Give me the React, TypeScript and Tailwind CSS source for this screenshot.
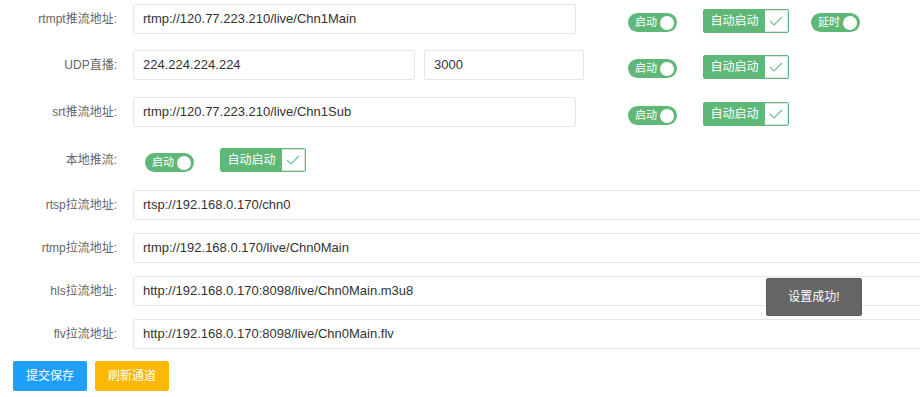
import React from "react";

const font = {
  fontFamily: '"Liberation Sans", Arial, "Noto Sans CJK SC", sans-serif',
};

const Toggle = ({ text }: { text: string }) => (
  <div className="flex h-[19px] w-[49px] items-center justify-between rounded-full bg-[#5FB878] pl-[7px] pr-[3px]">
    <span className="text-[11px] leading-none text-white">{text}</span>
    <span className="size-[14px] rounded-full bg-white" />
  </div>
);

const AutoStart = () => (
  <div className="flex h-6 w-[86px] overflow-hidden rounded-[2px] border border-[#5FB878]">
    <div className="flex w-[61px] items-center justify-center bg-[#5FB878] text-[12px] text-white">
      自动启动
    </div>
    <div className="flex flex-1 items-center justify-center border-y border-r border-[#e2e2e2] bg-white">
      <svg width="14" height="10" viewBox="0 0 14 10" fill="none">
        <path d="M1 5 L5 9 L13 1" stroke="#6cc28a" strokeWidth="1.1" />
      </svg>
    </div>
  </div>
);

const Label = ({ children, h = "h-[30px]" }: { children: React.ReactNode; h?: string }) => (
  <div className={`flex ${h} w-[117px] shrink-0 items-center justify-end text-[12px] text-[#666]`}>
    {children}
  </div>
);

const Input = ({ value, w }: { value: string; w: string }) => (
  <div
    className={`flex h-[30px] ${w} shrink-0 items-center rounded-[2px] border border-[#e6e6e6] bg-white pl-[9px] text-[13px] text-[#333]`}
  >
    {value}
  </div>
);

const Controls = ({ delay }: { delay?: boolean }) => (
  <div className="ml-[44px] flex items-start">
    <div className="mt-[9px]">
      <Toggle text="启动" />
    </div>
    <div className="ml-[26px] mt-[5px]">
      <AutoStart />
    </div>
    {delay && (
      <div className="ml-[22px] mt-[9px]">
        <Toggle text="延时" />
      </div>
    )}
  </div>
);

const pullRows = [
  { label: "rtsp拉流地址:", value: "rtsp://192.168.0.170/chn0" },
  { label: "rtmp拉流地址:", value: "rtmp://192.168.0.170/live/Chn0Main" },
  { label: "hls拉流地址:", value: "http://192.168.0.170:8098/live/Chn0Main.m3u8" },
  { label: "flv拉流地址:", value: "http://192.168.0.170:8098/live/Chn0Main.flv" },
];

export default function App() {
  return (
    <div className="relative h-[397px] w-[920px] overflow-hidden bg-white pt-[4px]" style={font}>
      {/* push rows */}
      <div className="flex items-start">
        <Label>rtmpt推流地址:</Label>
        <div className="ml-[16px] w-[451px]">
          <Input value="rtmp://120.77.223.210/live/Chn1Main" w="w-[443px]" />
        </div>
        <Controls delay />
      </div>

      <div className="mt-[16px] flex items-start">
        <Label>UDP直播:</Label>
        <div className="ml-[16px] flex w-[451px] gap-[9px]">
          <Input value="224.224.224.224" w="w-[282px]" />
          <Input value="3000" w="w-[160px]" />
        </div>
        <Controls />
      </div>

      <div className="mt-[17px] flex items-start">
        <Label>srt推流地址:</Label>
        <div className="ml-[16px] w-[451px]">
          <Input value="rtmp://120.77.223.210/live/Chn1Sub" w="w-[443px]" />
        </div>
        <Controls />
      </div>

      <div className="mt-[21px] flex items-start">
        <Label h="h-6">本地推流:</Label>
        <div className="ml-[28px] mt-[5px]">
          <Toggle text="启动" />
        </div>
        <div className="ml-[26px]">
          <AutoStart />
        </div>
      </div>

      {/* pull rows */}
      <div className="mt-[18px] flex flex-col gap-[13px]">
        {pullRows.map((r) => (
          <div key={r.label} className="flex items-start">
            <Label>{r.label}</Label>
            <div className="ml-[16px]">
              <Input value={r.value} w="w-[800px]" />
            </div>
          </div>
        ))}
      </div>

      <div className="ml-[13px] mt-[12px] flex gap-2">
        <button className="h-[30px] w-[74px] rounded-[2px] bg-[#1E9FFF] text-[12px] text-white">
          提交保存
        </button>
        <button className="h-[30px] w-[74px] rounded-[2px] bg-[#FFB800] text-[12px] text-white">
          刷新通道
        </button>
      </div>

      {/* toast */}
      <div className="absolute left-[766px] top-[278px] flex h-[38px] w-[96px] items-center justify-center rounded-[2px] border border-[#5a5a5a] bg-[#666] text-[12px] text-white">
        设置成功!
      </div>
    </div>
  );
}
